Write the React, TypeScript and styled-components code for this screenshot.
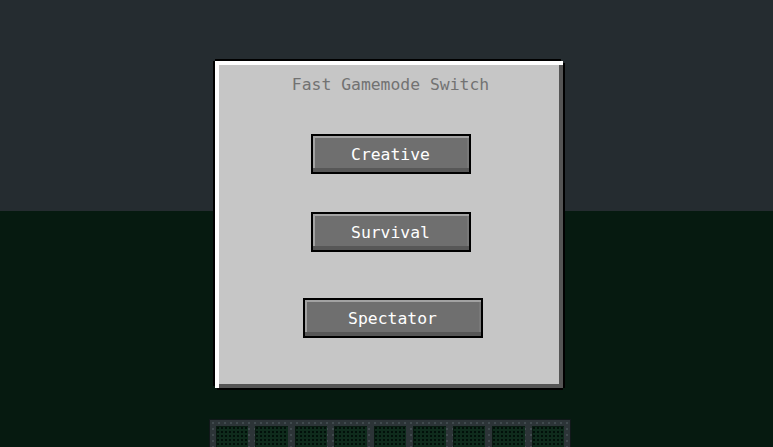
import React from 'react';
import styled, { createGlobalStyle } from 'styled-components';

const Global = createGlobalStyle`
  html, body { margin: 0; padding: 0; }
  body { background: #061a10; overflow: hidden; }
`;

const Screen = styled.div`
  width: 773px;
  height: 447px;
  overflow: hidden;
  box-sizing: border-box;
  padding: 59px 0 0 5px;
  background: linear-gradient(#252c30 0 211px, #061a10 211px 100%);
  display: flex;
  flex-direction: column;
  align-items: center;
  font-family: "DejaVu Sans Mono", "Liberation Mono", monospace;
`;

const Panel = styled.div`
  width: 352px;
  height: 331px;
  flex: none;
  box-sizing: border-box;
  padding: 2px;
  background: #000;
  clip-path: polygon(
    2px 0, calc(100% - 4px) 0, calc(100% - 4px) 2px, calc(100% - 2px) 2px,
    calc(100% - 2px) 4px, 100% 4px, 100% calc(100% - 2px), calc(100% - 2px) calc(100% - 2px),
    calc(100% - 2px) 100%, 4px 100%, 4px calc(100% - 2px), 2px calc(100% - 2px),
    2px calc(100% - 4px), 0 calc(100% - 4px), 0 2px, 2px 2px
  );
`;

const Face = styled.div`
  width: 100%;
  height: 100%;
  box-sizing: border-box;
  background: #c6c6c6;
  box-shadow: inset 4px 4px 0 #ffffff, inset -4px -4px 0 #555555;
  padding: 14px 0 0 3px;
  display: flex;
  flex-direction: column;
  align-items: center;
`;

const Title = styled.div`
  font-size: 16.4px;
  line-height: 20px;
  height: 20px;
  color: #727272;
  white-space: nowrap;
`;

const Button = styled.button<{ $w: number; $mt: number; $dx?: number }>`
  width: ${(p) => p.$w}px;
  height: 40px;
  flex: none;
  margin-top: ${(p) => p.$mt}px;
  margin-left: ${(p) => (p.$dx ?? 0) * 2}px;
  box-sizing: border-box;
  border: 2px solid #000;
  padding: 1px 0 0;
  background: #6f6f6f;
  box-shadow: inset 0 -4px 0 #575757, inset 2px 2px 0 #a2a2a2, inset -2px 0 0 #787878;
  color: #ffffff;
  font-family: "DejaVu Sans Mono", "Liberation Mono", monospace;
  font-size: 16.4px;
  line-height: 20px;
  display: flex;
  align-items: center;
  justify-content: center;
  cursor: pointer;
`;

const Hotbar = styled.div`
  margin-top: 29px;
  margin-left: 2px;
  width: 362px;
  height: 44px;
  flex: none;
  box-sizing: border-box;
  padding: 6px;
  display: flex;
  gap: 7px;
  background-color: #2c3437;
  background-image: radial-gradient(circle, #414b4f 0.7px, transparent 1px);
  background-size: 6px 6px;
  border: 1px solid #11181a;
`;

const Slot = styled.div`
  flex: 1;
  height: 32px;
  background-color: #0f2b1c;
  background-image: radial-gradient(circle, #02100a 0.9px, transparent 1.2px);
  background-size: 4px 4px;
  box-shadow: inset 1px 1px 0 #0a1c12;
`;

export default function App() {
  return (
    <>
      <Global />
      <Screen>
        <Panel>
          <Face>
            <Title>Fast Gamemode Switch</Title>
            <Button $w={160} $mt={39}>Creative</Button>
            <Button $w={160} $mt={38}>Survival</Button>
            <Button $w={180} $mt={46} $dx={2}>Spectator</Button>
          </Face>
        </Panel>
        <Hotbar>
          {Array.from({ length: 9 }).map((_, i) => (
            <Slot key={i} />
          ))}
        </Hotbar>
      </Screen>
    </>
  );
}
